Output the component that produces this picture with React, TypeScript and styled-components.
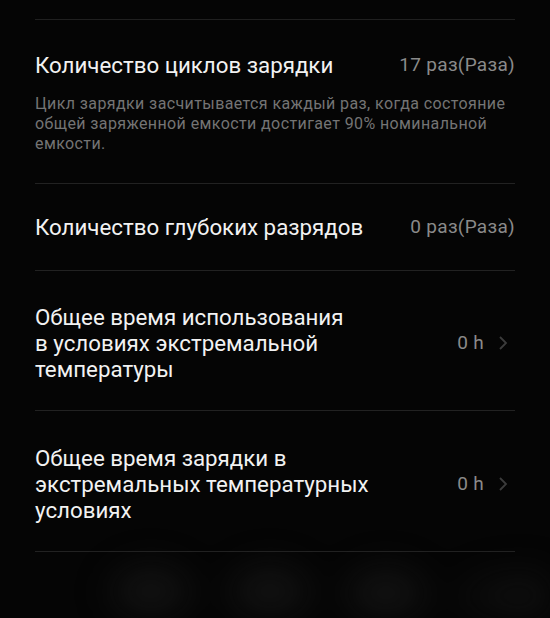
import React from 'react';
import styled, { createGlobalStyle } from 'styled-components';

const GlobalStyle = createGlobalStyle`
  html, body {
    margin: 0;
    padding: 0;
    background: #050505;
  }
  body {
    font-family: Roboto, "Noto Sans", "Liberation Sans", sans-serif;
    -webkit-font-smoothing: antialiased;
  }
`;

const Screen = styled.div`
  width: 550px;
  height: 618px;
  overflow: hidden;
  background: #050505;
  padding-top: 19px;
  box-sizing: border-box;
  position: relative;
`;

const List = styled.div`
  margin: 0 35px;
  border-top: 1px solid #202020;
`;

const Item = styled.div<{ $top: number; $bottom: number }>`
  padding: ${({ $top }) => $top}px 0 ${({ $bottom }) => $bottom}px;
  border-bottom: 1px solid #222;
`;

const Row = styled.div`
  display: flex;
  align-items: center;
  justify-content: space-between;
`;

const Title = styled.div<{ $maxWidth?: number }>`
  color: #f2f2f2;
  font-size: 22.3px;
  line-height: 26px;
  max-width: ${({ $maxWidth }) => ($maxWidth ? `${$maxWidth}px` : 'none')};
`;

const Value = styled.div`
  display: flex;
  align-items: center;
  gap: 14px;
  color: #8a8a8a;
  font-size: 19px;
  line-height: 26px;
  letter-spacing: 0.3px;
  white-space: nowrap;
`;

const Hint = styled.div`
  margin-top: 16px;
  color: #747474;
  font-size: 16px;
  line-height: 20px;
  letter-spacing: 0.4px;
`;

const Chevron = styled.svg`
  width: 10px;
  height: 16px;
  margin-right: 7px;
`;

const Glow = styled.div`
  position: absolute;
  left: 0;
  right: 0;
  bottom: 0;
  height: 64px;
  filter: blur(14px);
  background:
    radial-gradient(ellipse 55px 40px at 151px 38px, rgba(26, 26, 26, 0.8), transparent),
    radial-gradient(ellipse 55px 40px at 270px 38px, rgba(26, 26, 26, 0.8), transparent),
    radial-gradient(ellipse 55px 40px at 386px 40px, rgba(26, 26, 26, 0.8), transparent),
    radial-gradient(ellipse 80px 40px at 520px 44px, rgba(20, 20, 20, 0.7), transparent);
`;

const Arrow = () => (
  <Chevron viewBox="0 0 10 16">
    <path d="M2 2 L8 8 L2 14" fill="none" stroke="#3c3c3c" strokeWidth="1.8" />
  </Chevron>
);

export default function App() {
  return (
    <>
      <GlobalStyle />
      <Screen>
        <List>
          <Item $top={32} $bottom={29}>
            <Row>
              <Title>Количество циклов зарядки</Title>
              <Value>17 раз(Раза)</Value>
            </Row>
            <Hint>
              Цикл зарядки засчитывается каждый раз, когда состояние общей заряженной емкости достигает 90% номинальной емкости.
            </Hint>
          </Item>
          <Item $top={30} $bottom={30}>
            <Row>
              <Title>Количество глубоких разрядов</Title>
              <Value>0 раз(Раза)</Value>
            </Row>
          </Item>
          <Item $top={33} $bottom={28}>
            <Row>
              <Title $maxWidth={350}>Общее время использования в&nbsp;условиях экстремальной температуры</Title>
              <Value>
                0 h
                <Arrow />
              </Value>
            </Row>
          </Item>
          <Item $top={34} $bottom={28}>
            <Row>
              <Title $maxWidth={350}>Общее время зарядки в экстремальных температурных условиях</Title>
              <Value>
                0 h
                <Arrow />
              </Value>
            </Row>
          </Item>
        </List>
        <Glow />
      </Screen>
    </>
  );
}
